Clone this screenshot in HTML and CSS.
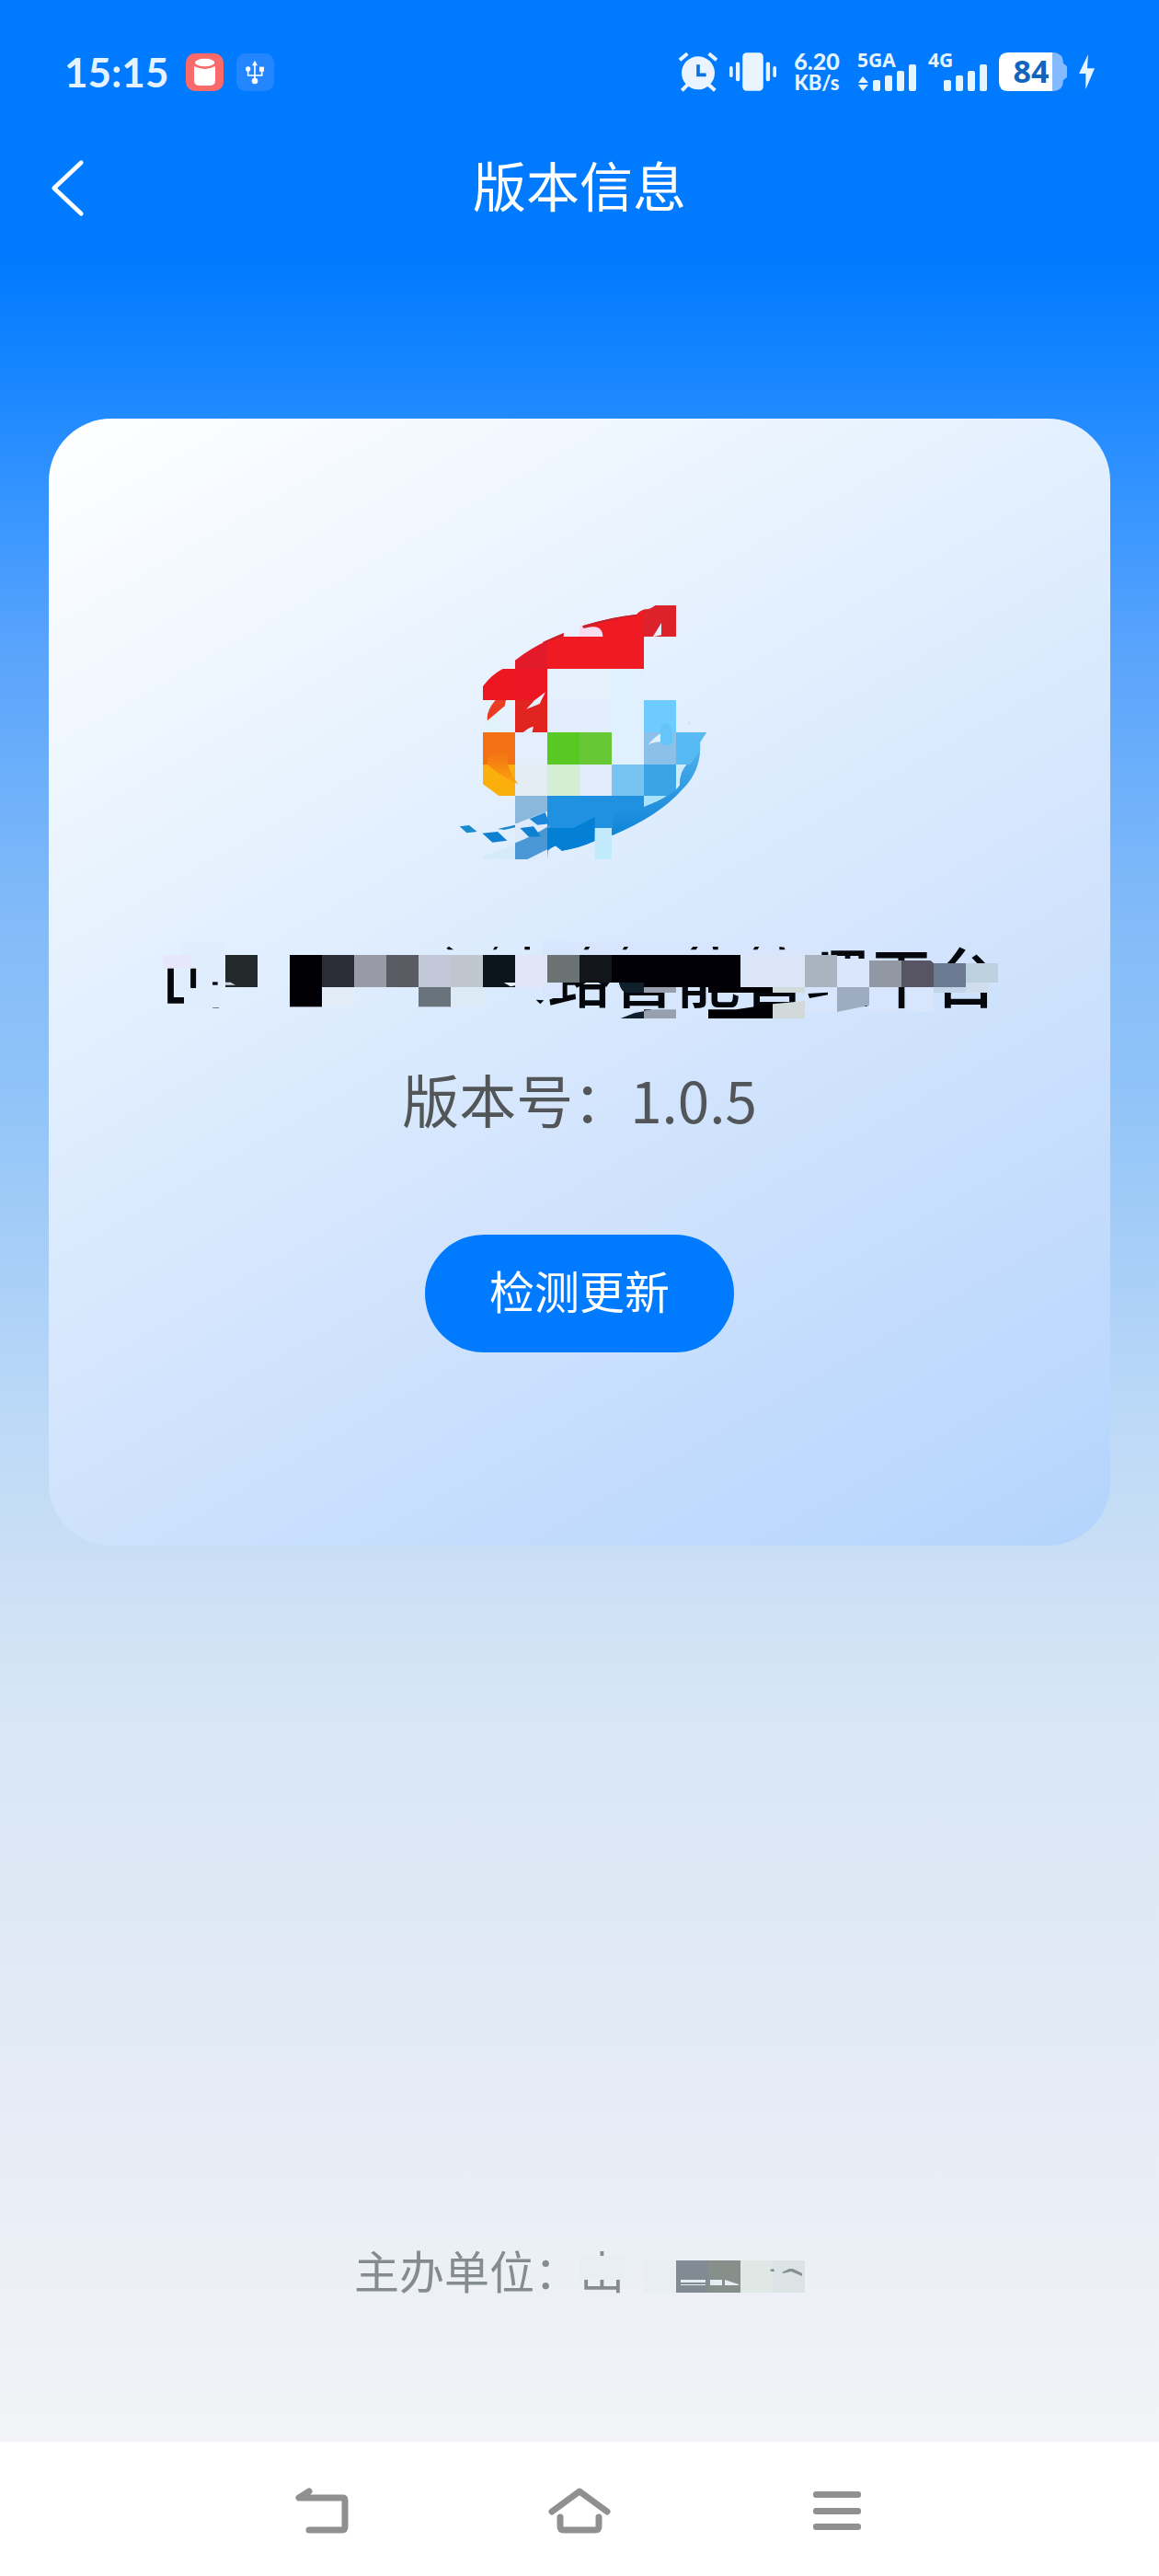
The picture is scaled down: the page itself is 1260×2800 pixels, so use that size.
FILE: index.html
```
<!DOCTYPE html>
<html lang="zh-CN">
<head>
  <meta charset="UTF-8">
  <meta name="viewport" content="width=device-width, initial-scale=1.0">
  <title>版本信息</title>
  <link rel="stylesheet" href="styles.css">
</head>
<body>
  <div class="status-bar">
    <div class="status-left">
      <span class="time">15:15</span>
      <svg class="app-icon" viewBox="0 0 123 123">
        <rect width="123" height="123" rx="30" fill="#fb6a6a"/>
        <ellipse cx="62" cy="30" rx="32" ry="13" fill="#fff"/>
        <path d="M27 42Q62 60 96 42V88Q96 105 80 105H43Q27 105 27 88Z" fill="#fff"/>
      </svg>
      <svg class="app-icon" viewBox="0 0 123 123">
        <rect width="123" height="123" rx="30" fill="#2486ff"/>
        <g fill="none" stroke="#fff" stroke-width="5"><path d="M60 34V90M38 52V72H83V52"/></g>
        <path d="M60 23L69 40H51Z" fill="#fff"/>
        <circle cx="38" cy="51" r="8" fill="#fff"/>
        <rect x="75" y="44" width="15" height="15" fill="#fff"/>
        <circle cx="60" cy="90" r="10" fill="#fff"/>
      </svg>
    </div>
    <div class="status-right">
      <svg class="icon-alarm" viewBox="0 0 126 126">
        <g stroke="#eaf4ff" stroke-width="12"><path d="M3 25L28 4M98 4L123 25M10 124L30 104M118 124L96 104"/></g>
        <circle cx="63" cy="67" r="54" fill="#eaf4ff"/>
        <path d="M63 40V73H89" fill="none" stroke="#0b72e0" stroke-width="11"/>
      </svg>
      <svg class="icon-vibrate" viewBox="0 0 154 126" fill="#eaf4ff">
        <rect x="43" width="68" height="126" rx="14"/>
        <rect x="21" y="31" width="13" height="63" rx="5"/>
        <rect y="45" width="11" height="36" rx="5"/>
        <rect x="120" y="31" width="13" height="63" rx="5"/>
        <rect x="143" y="45" width="11" height="36" rx="5"/>
      </svg>
      <div class="speed"><span class="speed-value">6.20</span><span>KB/s</span></div>
      <svg class="icon-signal" viewBox="0 0 64 42" fill="#e4f5ff">
        <text class="network" x="0" y="16">5GA</text>
        <path d="M1 33L6 26L12 33ZM1 35H12L6 42Z"/>
        <rect x="17" y="30" width="8" height="12" rx="2"/>
        <rect x="30" y="25" width="8" height="17" rx="2"/>
        <rect x="43" y="20" width="8" height="22" rx="2"/>
        <rect x="56" y="13" width="8" height="29" rx="2"/>
      </svg>
      <svg class="icon-signal" viewBox="0 0 64 42" fill="#e4f5ff">
        <text class="network" x="0" y="16">4G</text>
        <rect x="17" y="30" width="8" height="12" rx="2"/>
        <rect x="30" y="25" width="8" height="17" rx="2"/>
        <rect x="43" y="20" width="8" height="22" rx="2"/>
        <rect x="56" y="13" width="8" height="29" rx="2"/>
      </svg>
      <svg class="icon-battery" viewBox="0 0 74 42">
        <path d="M58 0H60Q70 1 70 12L74 15V27L70 30Q70 41 60 42H58Z" fill="#84baff"/>
        <path d="M58 0H10Q0 0 0 10V32Q0 42 10 42H58Z" fill="#fff"/>
        <text class="battery-level" x="35" y="33" text-anchor="middle">84</text>
      </svg>
      <svg class="icon-bolt" viewBox="0 0 51 114"><path d="M30 0L0 63H22L22 114L51 46H27Z" fill="#e4f5ff"/></svg>
    </div>
  </div>

  <header class="header">
    <button class="back" type="button" aria-label="返回">
      <svg viewBox="0 0 104 182"><path d="M96 8L8 91L96 174" fill="none" stroke="#fff" stroke-width="14" stroke-linecap="round" stroke-linejoin="round"/></svg>
    </button>
    <h1>版本信息</h1>
  </header>

  <main>
    <section class="card">
      <svg class="logo" viewBox="0 0 900 930">
        <defs>
          <linearGradient id="swoosh" x1="0" y1="0" x2="0" y2="1">
            <stop offset="0" stop-color="#5abaf3"/>
            <stop offset="0.6" stop-color="#2592de"/>
            <stop offset="1" stop-color="#0280d5"/>
          </linearGradient>
          <linearGradient id="flame" x1="0" y1="0" x2="0" y2="1">
            <stop offset="0" stop-color="#f37014"/>
            <stop offset="1" stop-color="#fba50d"/>
          </linearGradient>
        </defs>
        <!-- red arc -->
        <path d="M460 121Q550 92 640 83L660 156H460Z" fill="#ef1a22"/>
        <path d="M460 121Q550 92 640 83V88Q550 98 464 129Z" fill="#c5222c"/>
        <path d="M635 85Q650 66 672 68L660 160H630Z" fill="#ef1a22"/>
        <path d="M660 68Q680 68 697 54H765V156H660Z" fill="#dc222b"/>
        <path d="M689 157L717 111V151Z" fill="#e8f2fd"/>
        <path d="M450 115L464 129Q525 110 526 156H450Z" fill="#f5dcee"/>
        <path d="M330 174Q360 160 400 144L397 156H660V261H345Z" fill="#ef1a22"/>
        <path d="M240 233Q290 195 345 169V261H240Z" fill="#e31a2a"/>
        <path d="M330 174L397 145V156L345 171Z" fill="#c5222c"/>
        <path d="M135 318Q165 278 200 261H240V363H135Z" fill="#ed1722"/>
        <path d="M240 261H345V363H240Z" fill="#ec1722"/>
        <path d="M240 363H345V468H240Z" fill="#e12420"/>
        <path d="M277 392L303 364L339 337L320 375Z" fill="#e5f0fd"/>
        <path d="M266 468Q285 452 300 449L295 470Z" fill="#e5f0fd"/>
        <path d="M176 363H210L206 382L150 430Q144 400 176 363Z" fill="#ea3b25"/>
        <path d="M148 432L202 391L170 440L202 438L150 477Z" fill="#e0f4f7"/>
        <!-- pale tiles -->
        <rect x="345" y="261" width="210" height="102" fill="#e5f1fd"/>
        <rect x="345" y="363" width="210" height="105" fill="#e2eefe"/>
        <rect x="555" y="261" width="105" height="312" fill="#e0f0fe"/>
        <rect x="240" y="468" width="105" height="105" fill="#e3effd"/>
        <rect x="240" y="573" width="105" height="102" fill="#e4ecf4"/>
        <rect x="450" y="573" width="105" height="102" fill="#e1ecfb"/>
        <!-- colour tiles -->
        <rect x="135" y="468" width="105" height="105" fill="#f37014"/>
        <path d="M135 573H240V675H187L135 637Z" fill="#fbaf0c"/>
        <path d="M150 573V548Q165 525 210 530Q218 550 216 572Q230 612 250 637Q190 610 150 573Z" fill="url(#flame)"/>
        <rect x="345" y="468" width="105" height="105" fill="#58c822"/>
        <rect x="450" y="468" width="105" height="105" fill="#67c836"/>
        <rect x="345" y="573" width="105" height="102" fill="#d2eed3"/>
        <rect x="555" y="573" width="105" height="102" fill="#77c4f0"/>
        <rect x="660" y="363" width="105" height="105" fill="#6dcbff"/>
        <rect x="660" y="468" width="105" height="105" fill="#8bc1e8"/>
        <path d="M673 509Q700 478 716 472V499Q690 500 673 509Z" fill="#e2effd"/>
        <path d="M714 455Q735 420 753 460V500Q740 520 714 502Z" fill="#65c5fa"/>
        <path d="M804 433L810 436V445Z" fill="#9cd8fa"/>
        <rect x="660" y="573" width="105" height="102" fill="#3ba4e7"/>
        <!-- blue swoosh -->
        <path d="M765 468H864L843 500Q850 590 785 655Q710 740 560 803H500V822Q460 840 393 854L372 838L345 850V675H660V710Q710 692 734 675Q760 665 777 640Q775 600 799 573H765Z" fill="url(#swoosh)"/>
        <path d="M765 468H864L843 500V530L810 573H765Z" fill="#58baf2"/>
        <path d="M345 675H660V715Q600 730 560 732V780H345Z" fill="#2091e0"/>
        <path d="M345 780H430L500 745V822Q450 846 393 854L372 838L345 850Z" fill="#0380d5"/>
        <path d="M660 675H734L660 711Z" fill="#a7e4fb"/>
        <path d="M765 573H799L777 603V635H765Z" fill="#cdeaf9"/>
        <rect x="500" y="780" width="55" height="102" fill="#c2eafd"/>
        <!-- checker tail -->
        <rect x="240" y="675" width="105" height="90" fill="#8ab8dc"/>
        <path d="M240 767L345 725V780L240 830Z" fill="#dceafb"/>
        <path d="M240 829Q300 805 355 770L345 882H240Z" fill="#4997d4"/>
        <path d="M280 882L345 850V882Z" fill="#dfebfc"/>
        <path d="M345 780H385V825L345 855Z" fill="#0380d5"/>
        <path d="M287 750L338 729L352 766L313 770Z" fill="#1a86d8"/>
        <path d="M256 780L300 775L324 807L285 809Z" fill="#0e80d2"/>
        <path d="M183 783L240 770V778L205 786Z" fill="#1a86d2"/>
        <path d="M133 797L183 792L214 821L166 827Z" fill="#0e80d2"/>
        <path d="M59 775L90 771L116 792L82 796Z" fill="#1a8bd0"/>
        <path d="M135 873Q190 850 240 835V882H135Z" fill="#d5eafa"/>
      </svg>

      <div class="platform">
        <h2>山　　　　　路智能管理平台</h2>
        <svg class="mosaic" viewBox="0 0 2820 330" aria-hidden="true">
          <!-- blank strips over the characters -->
          <g fill="#e0edfd">
            <rect x="110" y="44" width="140" height="84"/>
            <rect x="160" y="120" width="92" height="136"/>
            <rect x="92" y="128" width="50" height="84"/>
            <rect x="120" y="190" width="60" height="66"/>
          </g>
          <g fill="#d7e6fd">
            <rect x="1290" y="40" width="910" height="130"/>
            <rect x="1290" y="170" width="65" height="55"/>
            <rect x="2145" y="189" width="110" height="80"/>
            <rect x="2355" y="189" width="95" height="80"/>
            <rect x="2475" y="189" width="90" height="80"/>
          </g>
          <!-- stroke tops -->
          <g fill="#04080c">
            <path d="M976 62L984 56L999 67H982ZM1128 67L1134 57H1144L1138 67ZM1231 57H1248V67H1231ZM1424 67L1430 57H1444L1438 67ZM1550 67L1556 57H1569L1563 67ZM1772 67L1780 57H1796L1790 67ZM1844 57H1862V67H1846ZM1976 67L1982 57H1996L1990 67ZM2062 57L2078 59L2080 67H2062Z"/>
            <path d="M142 128L159 158V192H142Z"/>
            <path d="M213 172H230V182H213Z"/>
          </g>
          <g>
            <rect x="50" y="84" width="95" height="44" fill="#e6e7fc"/>
            <rect x="255" y="84" width="105" height="105" fill="#23292b"/>
            <path d="M255 173H272L288 182H255Z" fill="#cdd6e2"/>
            <rect x="465" y="84" width="105" height="169" fill="#000004"/>
            <rect x="570" y="84" width="105" height="105" fill="#2b2d36"/>
            <rect x="570" y="189" width="105" height="63" fill="#e2edf8"/>
            <rect x="675" y="84" width="105" height="105" fill="#989ba6"/>
            <rect x="780" y="84" width="105" height="105" fill="#5a5c63"/>
            <rect x="885" y="84" width="105" height="105" fill="#c3c8d8"/>
            <rect x="885" y="189" width="105" height="64" fill="#69737b"/>
            <rect x="990" y="84" width="105" height="105" fill="#bfc6cd"/>
            <rect x="990" y="189" width="105" height="63" fill="#dceaf6"/>
            <rect x="1095" y="84" width="105" height="105" fill="#0b151b"/>
            <path d="M1163 174H1200V184L1185 187Z" fill="#e6f0fa"/>
            <rect x="1200" y="84" width="105" height="105" fill="#e1e5f8"/>
            <path d="M1268 230L1294 232L1282 244Z" fill="#04080c"/>
            <rect x="1305" y="84" width="105" height="90" fill="#6a7274"/>
            <rect x="1410" y="84" width="105" height="90" fill="#121519"/>
            <path d="M1515 84H1935V189H1620V207H1565Q1545 204 1539 174H1515Z" fill="#000006"/>
            <path d="M1539 174H1620V207H1565Q1545 204 1539 174Z" fill="#10202a"/>
            <rect x="1620" y="189" width="105" height="18" fill="#98a0b0"/>
            <rect x="1830" y="189" width="210" height="18" fill="#000004"/>
            <rect x="1935" y="84" width="210" height="105" fill="#dae5f8"/>
            <rect x="2040" y="189" width="105" height="18" fill="#d2d9db"/>
            <rect x="2145" y="84" width="105" height="105" fill="#aab4c0"/>
            <rect x="2250" y="96" width="105" height="93" fill="#dae6fb"/>
            <path d="M2155 210L2220 206V214L2160 225Z" fill="#04080c"/>
            <path d="M2250 189H2355V248L2250 270Z" fill="#9dacc0"/>
            <rect x="2355" y="102" width="105" height="87" fill="#9198a3"/>
            <path d="M2460 102H2555L2565 111V189H2460Z" fill="#575563"/>
            <rect x="2565" y="111" width="105" height="78" fill="#6b7a90"/>
            <rect x="2565" y="189" width="105" height="18" fill="#c4d4e8"/>
            <rect x="2670" y="111" width="105" height="63" fill="#bcd0e0"/>
            <rect x="2670" y="174" width="75" height="33" fill="#cfdded"/>
            <rect x="2452" y="221" width="17" height="25" fill="#04080c"/>
            <path d="M1544 291L1590 273L1650 262H1620V291Z" fill="#10202a"/>
            <path d="M1620 266L1655 262H1725V291H1620Z" fill="#98a0b0"/>
            <path d="M1830 262H1920L2040 244V291H1830Z" fill="#000004"/>
            <path d="M2040 244L2145 234V291H2040Z" fill="#d2d9db"/>
          </g>
        </svg>
      </div>

      <p class="version">版本号：1.0.5</p>
      <button class="update" type="button">检测更新</button>
    </section>
  </main>

  <footer class="sponsor">
    <div class="sponsor-line">
      <p>主办单位：山　　　　</p>
      <svg class="sponsor-mosaic" viewBox="0 0 490 90" aria-hidden="true">
        <rect x="245" y="30" width="49" height="26" fill="#e9eef5"/>
        <rect x="315" y="35" width="35" height="35" fill="#e8eef3"/>
        <rect x="350" y="35" width="35" height="35" fill="#828a93"/>
        <rect x="385" y="35" width="35" height="35" fill="#868f89"/>
        <rect x="420" y="35" width="35" height="35" fill="#dfe8e5"/>
        <rect x="455" y="35" width="35" height="35" fill="#dbe3e5"/>
        <path d="M355 56H382V59H355ZM355 61H382V62H355ZM387 56H400V62H403V56L418 61V62H387Z" fill="#e6edf2"/>
        <path d="M452 45L456 44L457 47H453ZM465 48L473 44H477L487 49V52L475 47L467 49Z" fill="#868f91"/>
      </svg>
    </div>
  </footer>

  <nav class="nav-bar">
    <button type="button" aria-label="返回">
      <svg viewBox="0 0 70 56" fill="none" stroke="#909090" stroke-width="7" stroke-linecap="round" stroke-linejoin="round"><path d="M21 6L10 13H58Q60 13 60 16V44Q60 48 57 48H21"/></svg>
    </button>
    <button type="button" aria-label="主页">
      <svg viewBox="0 0 70 56" fill="none" stroke="#909090" stroke-width="7" stroke-linecap="round" stroke-linejoin="round"><path d="M5 28L35 6L65 28M14 34V44Q14 48 18 48H52Q56 48 56 44V34"/></svg>
    </button>
    <button type="button" aria-label="菜单">
      <svg viewBox="0 0 70 56" fill="#909090"><rect x="9" y="6" width="52" height="7" rx="3"/><rect x="9" y="24" width="52" height="7" rx="3"/><rect x="9" y="41" width="52" height="7" rx="3"/></svg>
    </button>
  </nav>
</body>
</html>
```
FILE: styles.css
```
* {
  box-sizing: border-box;
}

body {
  margin: 0;
  min-height: 100vh;
  display: flex;
  flex-direction: column;
  font-family: "Noto Sans CJK SC", "Noto Sans", sans-serif;
  background: linear-gradient(#007aff 0, #007aff 10%, #1484ff 14%, #3393ff 19%, #58a3fc 25%, #70b1fa 31%, #84bbf8 36%, #8fc3f8 42%, #abd0f7 50%, #bcd9f7 55%, #cbdff5 61%, #d7e6f6 66%, #e2eaf5 78%, #f2f3f7 94%);
}

h1,
h2,
p {
  margin: 0;
  font-weight: 400;
}

button {
  border: 0;
  padding: 0;
  background: none;
  font-family: inherit;
}

svg {
  display: block;
  overflow: visible;
}

.status-bar {
  display: flex;
  justify-content: space-between;
  align-items: center;
  height: 156px;
  padding: 0 70px;
}

.status-left,
.status-right {
  display: flex;
  align-items: center;
}

.status-left {
  gap: 14px;
}

.time {
  margin-right: 5px;
  font-family: Lato, sans-serif;
  font-size: 44px;
  font-weight: 700;
  color: #e4f3ff;
}

.app-icon {
  width: 41px;
  height: 41px;
}

.status-right {
  gap: 13px;
}

.icon-alarm {
  width: 42px;
  height: 42px;
}

.icon-vibrate {
  width: 51px;
  height: 42px;
}

.speed {
  display: flex;
  flex-direction: column;
  width: 62px;
  align-items: center;
  font-family: Lato, sans-serif;
  font-size: 22px;
  font-weight: 900;
  line-height: 24px;
  color: #e4f5ff;
}

.speed-value {
  font-size: 25px;
}

.icon-signal {
  width: 64px;
  height: 42px;
}

.network {
  font-family: "Noto Sans", sans-serif;
  font-size: 21px;
  font-weight: 700;
}

.icon-battery {
  width: 74px;
  height: 42px;
}

.battery-level {
  font-family: "Noto Sans", sans-serif;
  font-size: 34px;
  font-weight: 700;
  fill: #1265bd;
}

.icon-bolt {
  width: 17px;
  height: 38px;
}

.header {
  display: grid;
  grid-template-columns: 160px 1fr 160px;
  align-items: center;
  height: 96px;
}

.back {
  justify-self: start;
  margin-left: 56px;
}

.back svg {
  width: 35px;
  height: 61px;
}

.header h1 {
  padding-bottom: 8px;
  font-size: 58px;
  line-height: 84px;
  text-align: center;
  color: #fff;
}

main {
  padding: 203px 53px 0;
}

.card {
  display: flex;
  flex-direction: column;
  align-items: center;
  padding: 185px 0 210px;
  border-radius: 68px;
  background: linear-gradient(150deg, #fff 0%, #e3f0fe 35%, #d2e4fd 60%, #b4d4fd 100%);
}

.logo {
  width: 300px;
  height: 310px;
}

.platform {
  position: relative;
  width: 940px;
  height: 110px;
  margin-top: 60px;
}

.platform h2 {
  font-size: 70px;
  font-weight: 500;
  line-height: 100px;
  text-align: center;
  white-space: pre;
  color: #04080c;
}

.mosaic {
  position: absolute;
  inset: 0;
  width: 100%;
  height: 100%;
}

.version {
  margin-top: 30px;
  font-size: 62px;
  line-height: 88px;
  color: #525658;
}

.update {
  width: 336px;
  height: 128px;
  margin-top: 104px;
  padding-bottom: 10px;
  border-radius: 64px;
  font-size: 49px;
  color: #fff;
  background: #007aff;
}

.sponsor {
  display: flex;
  justify-content: center;
  margin-top: auto;
  padding-bottom: 142px;
}

.sponsor-line {
  position: relative;
}

.sponsor-line p {
  font-size: 49px;
  line-height: 90px;
  white-space: pre;
  color: #858c90;
}

.sponsor-mosaic {
  position: absolute;
  inset: 0;
  width: 100%;
  height: 100%;
}

.nav-bar {
  display: flex;
  justify-content: center;
  gap: 210px;
  height: 146px;
  padding-top: 48px;
  background: #fff;
}

.nav-bar button {
  height: 56px;
}

.nav-bar svg {
  width: 70px;
  height: 56px;
}
```
